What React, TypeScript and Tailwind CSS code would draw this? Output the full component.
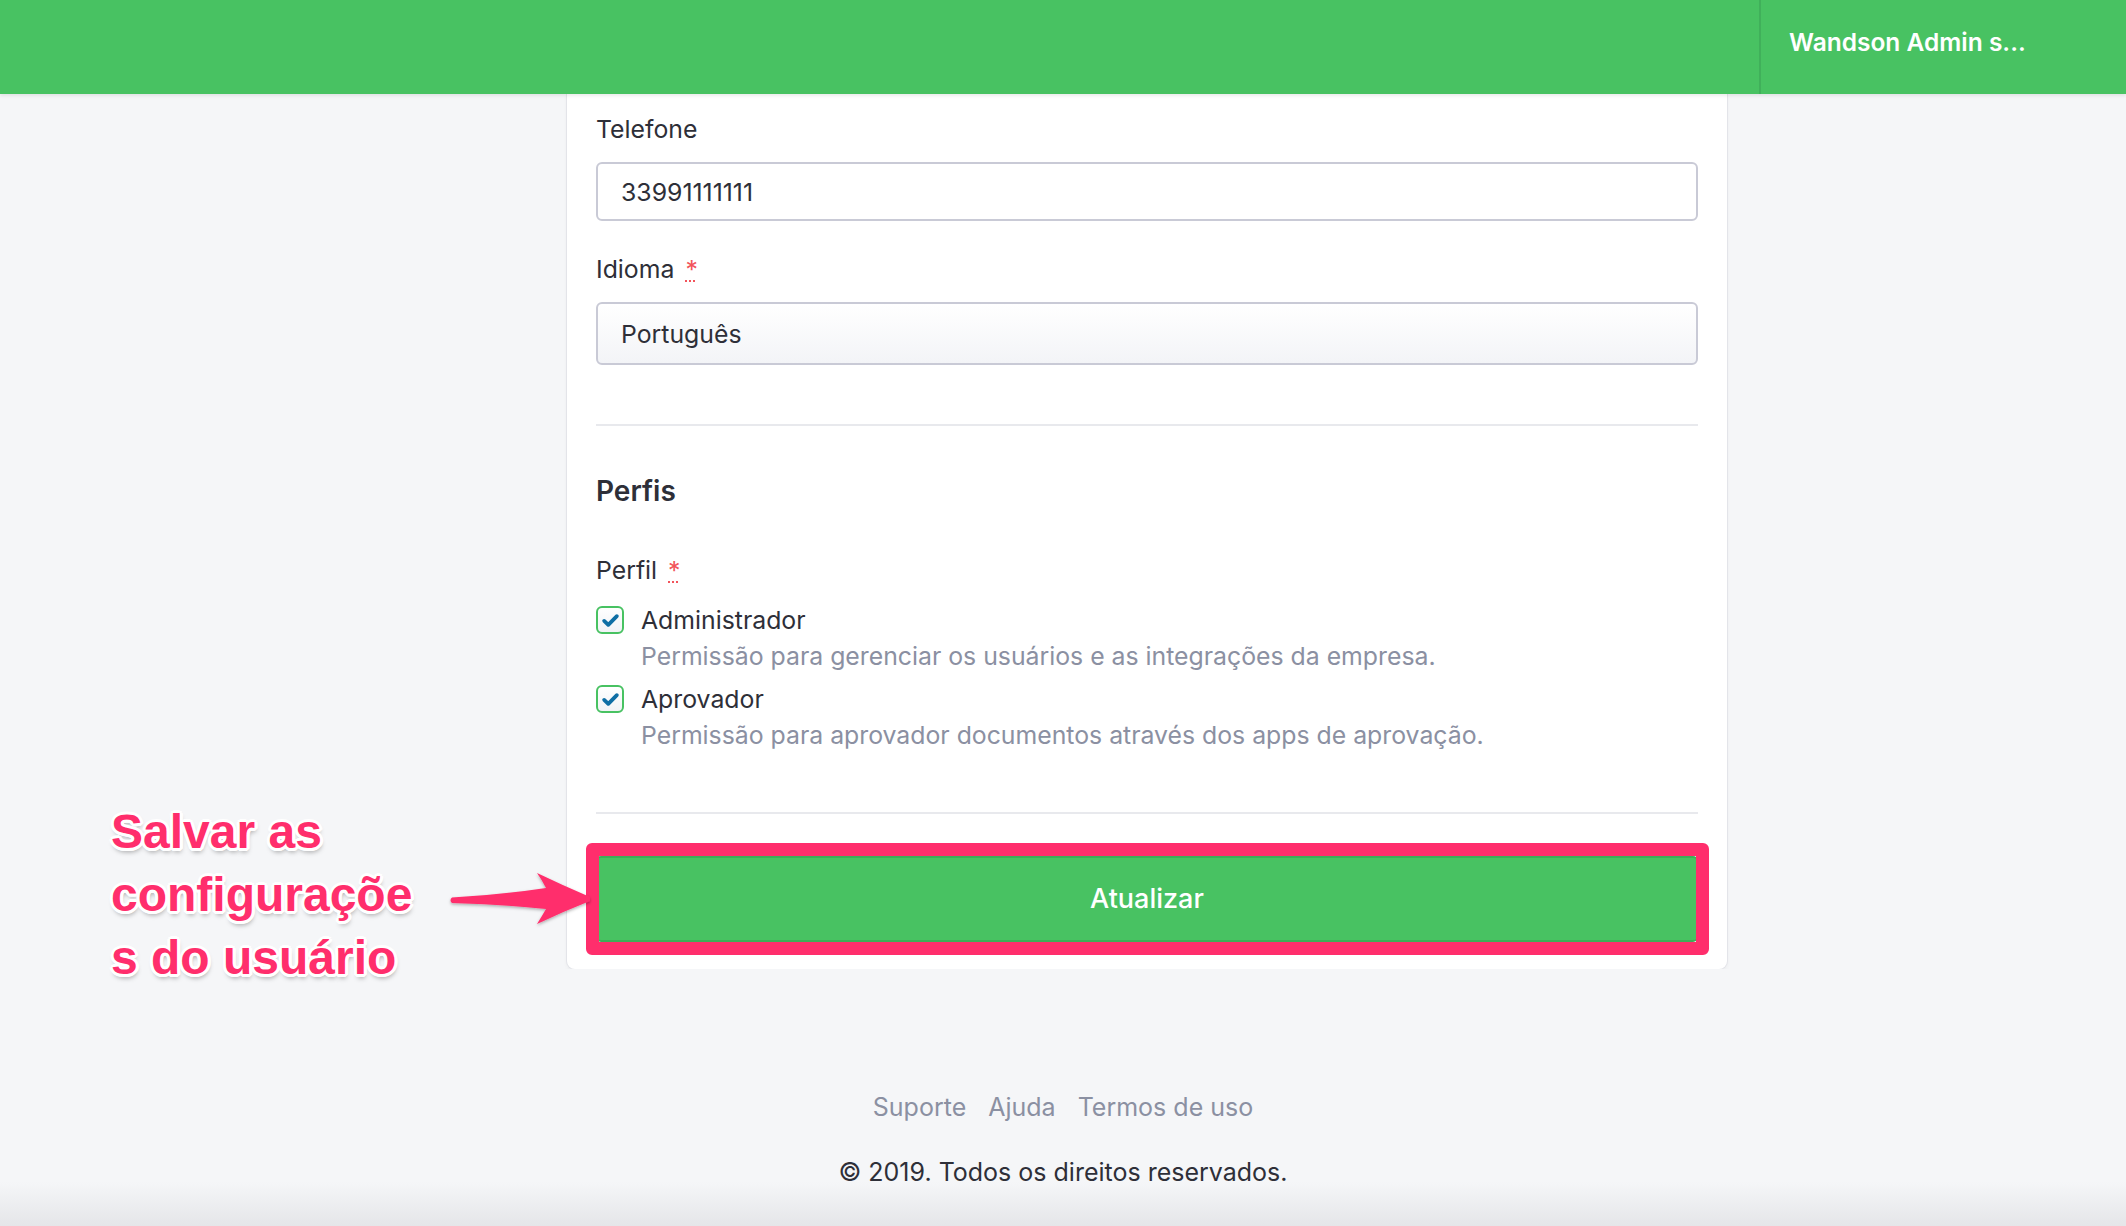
import React from "react";

function Check() {
  return (
    <div className="flex h-[28px] w-[28px] items-center justify-center rounded-[6px] border-2 border-[#48c262] bg-[linear-gradient(to_bottom,#ffffff,#f1f3f6)]">
      <svg width="19" height="19" viewBox="0 0 24 24" fill="none">
        <path d="M4 12.5l5.2 5L20 6.5" stroke="#0f6fa5" strokeWidth="4.8" strokeLinecap="round" strokeLinejoin="round" />
      </svg>
    </div>
  );
}

function Req() {
  return (
    <span className="ml-[11px] text-[#f2545b] underline decoration-dotted decoration-[#f2545b] decoration-2 underline-offset-[2px]">*</span>
  );
}

function Perm({ title, desc, className }: { title: string; desc: string; className: string }) {
  return (
    <div className={"flex " + className}>
      <div className="flex h-[36px] w-[45px] shrink-0 items-center">
        <Check />
      </div>
      <div>
        <div className="text-[24.8px] leading-[36px] text-[#2e2f38]">{title}</div>
        <div className="text-[24.8px] leading-[36px] text-[#8b90a2]">{desc}</div>
      </div>
    </div>
  );
}

const outline =
  "[text-shadow:3px_0_0_#fff,-3px_0_0_#fff,0_3px_0_#fff,0_-3px_0_#fff,2px_2px_0_#fff,-2px_-2px_0_#fff,2px_-2px_0_#fff,-2px_2px_0_#fff,3px_1px_0_#fff,-3px_1px_0_#fff,1px_3px_0_#fff,-1px_3px_0_#fff,1px_4px_5px_rgba(0,0,0,0.35)]";

export default function App() {
  return (
    <div className="relative min-h-[1226px] w-[2126px] overflow-hidden bg-[#f5f6f8] font-['Inter',sans-serif] text-[#2e2f38]">
      <header className="relative z-10 flex h-[94px] justify-end bg-[#48c262] shadow-[0_2px_3px_rgba(0,0,0,0.08)]">
        <div className="flex w-[367px] items-center border-l-2 border-[#40b05a] pb-[9px] pl-[28px] text-[24.5px] font-semibold text-white">
          Wandson Admin s...
        </div>
      </header>

      <main className="ml-[567px] w-[1160px]">
        <div className="rounded-b-[8px] bg-white px-[29px] pb-[27px] pt-[17px] shadow-[0_0_0_1px_#e3e4e9,0_2px_4px_rgba(0,0,0,0.06)]">
          <label className="block text-[24.8px] leading-[36px]">Telefone</label>
          <div className="mt-[15px] flex h-[59px] items-center rounded-[6px] border-2 border-[#c9cad6] bg-white px-[23px] text-[24.8px] leading-[36px]">
            33991111111
          </div>

          <label className="mt-[30px] block text-[24.8px] leading-[36px]">
            Idioma
            <Req />
          </label>
          <div className="mt-[15px] flex h-[63px] items-center rounded-[6px] border-2 border-[#c9cad6] bg-[linear-gradient(to_bottom,#ffffff,#f3f4f7)] px-[23px] text-[24.8px] leading-[36px]">
            Português
          </div>

          <div className="mt-[59px] border-t-2 border-[#e8e9ed]" />

          <h2 className="mt-[47px] text-[28px] font-semibold leading-[36px]">Perfis</h2>

          <label className="mt-[43px] block text-[24.8px] leading-[36px]">
            Perfil
            <Req />
          </label>

          <Perm
            className="mt-[14px]"
            title="Administrador"
            desc="Permissão para gerenciar os usuários e as integrações da empresa."
          />
          <Perm
            className="mt-[7px]"
            title="Aprovador"
            desc="Permissão para aprovador documentos através dos apps de aprovação."
          />

          <div className="mt-[59px] border-t-2 border-[#e8e9ed]" />

          <div className="relative mt-[42px]">
            <button className="flex h-[86px] w-full items-center justify-center rounded-[5px] border-y-2 border-[#3dae57] bg-[#48c262] text-[27px] font-medium text-white">
              Atualizar
            </button>
            <div className="absolute -bottom-[13px] -left-[10px] -right-[11px] -top-[13px] rounded-[6px] border-[13px] border-[#ff2e6c]" />
          </div>
        </div>
      </main>

      <footer className="flex h-[259px] flex-col items-center bg-[linear-gradient(to_bottom,#f5f6f8_0,#f5f6f8_213px,#e4e5e8_259px)]">
        <div className="mt-[120px] flex gap-[22px] text-[25px] leading-[36px] text-[#8b90a2]">
          <span>Suporte</span>
          <span>Ajuda</span>
          <span>Termos de uso</span>
        </div>
        <div className="mt-[29px] text-[25px] leading-[36px] text-[#2e2f38]">© 2019. Todos os direitos reservados.</div>
      </footer>

      <div
        className={
          "absolute left-[111px] top-[800px] font-['Liberation_Sans',Arial,sans-serif] text-[48px] font-bold leading-[63px] text-[#ff2e6c] " +
          outline
        }
      >
        <div>Salvar as</div>
        <div>configuraçõe</div>
        <div>s do usuário</div>
      </div>

      <svg className="absolute left-[440px] top-[860px]" width="160" height="80" viewBox="440 860 160 80">
        <defs>
          <filter id="sh" x="-20%" y="-40%" width="140%" height="180%">
            <feDropShadow dx="0" dy="1.5" stdDeviation="1.5" floodColor="#000" floodOpacity="0.3" />
          </filter>
        </defs>
        <path
          d="M452 897.5 Q500 895 546 888 Q542 880 537 873 Q562 885 590 897 L590 901 Q562 912 537 924 Q542 916 546 909 Q500 904 452 903 Q449 900 452 897.5 Z"
          fill="#ff2e6c"
          filter="url(#sh)"
        />
      </svg>
    </div>
  );
}
